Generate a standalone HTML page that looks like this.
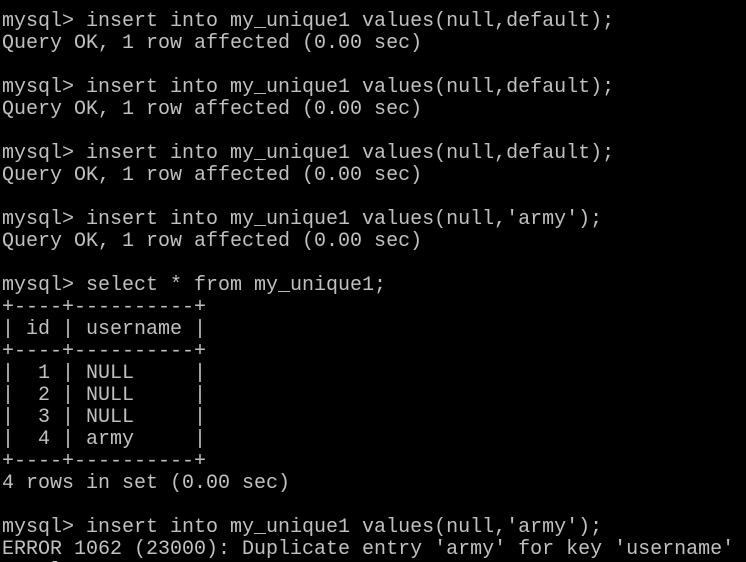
<!DOCTYPE html>
<html><head><meta charset="utf-8"><style>
html,body{margin:0;padding:0;background:#000;width:746px;height:562px;overflow:hidden}
pre{margin:0;padding:11px 0 0 2px;font-family:"Liberation Mono",monospace;font-size:20px;line-height:22px;color:#c0c0c0;white-space:pre}
</style></head><body><pre>mysql&gt; insert into my_unique1 values(null,default);
Query OK, 1 row affected (0.00 sec)

mysql&gt; insert into my_unique1 values(null,default);
Query OK, 1 row affected (0.00 sec)

mysql&gt; insert into my_unique1 values(null,default);
Query OK, 1 row affected (0.00 sec)

mysql&gt; insert into my_unique1 values(null,'army');
Query OK, 1 row affected (0.00 sec)

mysql&gt; select * from my_unique1;
+----+----------+
| id | username |
+----+----------+
|  1 | NULL     |
|  2 | NULL     |
|  3 | NULL     |
|  4 | army     |
+----+----------+
4 rows in set (0.00 sec)

mysql&gt; insert into my_unique1 values(null,'army');
ERROR 1062 (23000): Duplicate entry 'army' for key 'username'
mysql&gt; </pre></body></html>
